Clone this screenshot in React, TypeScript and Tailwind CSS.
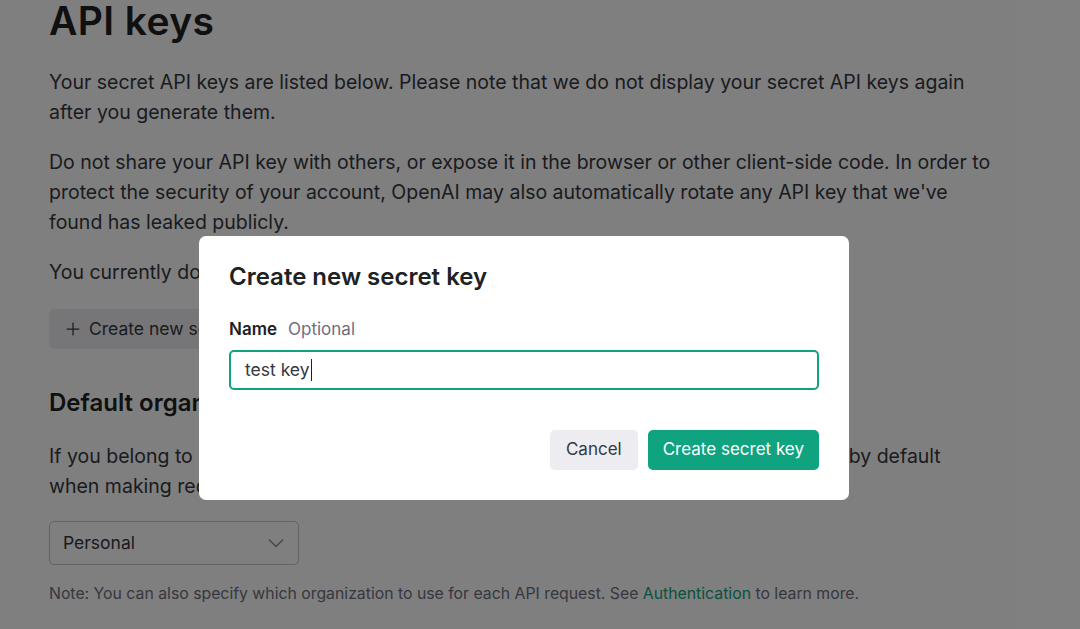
import { Plus } from 'lucide-react';

const font = { fontFamily: 'Inter, "Noto Sans", sans-serif' };

const ApiKeysPage = () => {
  return (
    <main className="px-[49px] text-[#353740]">
      <h1 className="text-[39px] leading-[42px] font-semibold tracking-[0.4px] text-[#202123]">API keys</h1>

      <div className="w-[945px] text-[19.5px] leading-[30px]">
        <p className="mt-[25px]">
          Your secret API keys are listed below. Please note that we do not display your secret API keys again after you
          generate them.
        </p>
        <p className="mt-5">
          Do not share your API key with others, or expose it in the browser or other client-side code. In order to
          protect the security of your account, OpenAI may also automatically rotate any API key that we've found has
          leaked publicly.
        </p>
        <p className="mt-5">You currently do not have any API keys. Please create one below.</p>
      </div>

      <button className="mt-[22px] flex h-10 items-center gap-[6px] rounded-[5px] bg-[#ececf1] pl-[14px] pr-4 text-[17.5px] text-[#353740]">
        <Plus size={20} strokeWidth={1.5} />
        Create new secret key
      </button>

      <h2 className="mt-[38px] text-[24px] leading-8 font-semibold text-[#202123]">Default organization</h2>
      <p className="mt-[22px] w-[945px] text-[19.5px] leading-[30px]">
        If you belong to multiple organizations, this setting controls which organization is used by default when making
        requests with the API keys above.
      </p>

      <div className="mt-5 flex h-11 w-[250px] items-center justify-between rounded-[5px] border border-[#c5c5d2] pl-[13px] pr-[14px] text-[17.5px]">
        <span>Personal</span>
        <svg width="16" height="10" viewBox="0 0 16 10" fill="none" className="text-[#8e8ea0]">
          <path d="M1 1.5 8 8.5 15 1.5" stroke="currentColor" strokeWidth="1.5" />
        </svg>
      </div>

      <p className="mt-[19px] text-[15.8px] leading-5 text-[#6e6e80]">
        Note: You can also specify which organization to use for each API request. See{' '}
        <span className="text-[#10a37f]">Authentication</span> to learn more.
      </p>
    </main>
  );
};

const CreateKeyModal = () => {
  return (
    <div className="absolute left-[199px] top-[236px] w-[650px] rounded-[7px] bg-white px-[30px] pt-[26px] pb-[30px]">
      <h3 className="text-[24px] leading-[30px] font-semibold text-[#202123]">Create new secret key</h3>

      <div className="mt-[25px] flex items-center gap-[11px] text-[17px] leading-6">
        <span className="font-semibold text-[#202123]">Name</span>
        <span className="text-[#6e6e80]">Optional</span>
      </div>

      <div className="mt-[9px] flex h-10 items-center rounded-[5px] border-2 border-[#10a37f] px-[14px] text-[17.5px] text-[#353740]">
        test key
        <span className="ml-px inline-block h-[22px] w-px bg-[#202123]" />
      </div>

      <div className="mt-10 flex justify-end gap-[10px] text-[17px]">
        <button className="h-10 rounded-[5px] bg-[#ececf1] px-[16px] text-[#353740]">Cancel</button>
        <button className="h-10 rounded-[5px] bg-[#10a37f] px-[15px] text-white">Create secret key</button>
      </div>
    </div>
  );
};

export default function App() {
  return (
    <div className="relative h-[629px] w-[1080px] overflow-hidden bg-white" style={font}>
      <ApiKeysPage />
      {/* backdrop */}
      <div className="absolute inset-0 bg-black/50" />
      <CreateKeyModal />
    </div>
  );
}
